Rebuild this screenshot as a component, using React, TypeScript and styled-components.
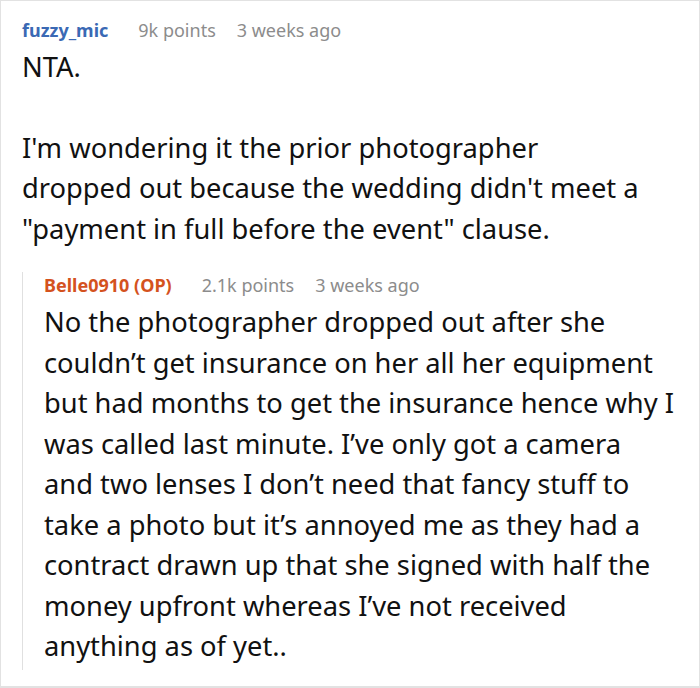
import { createGlobalStyle, styled } from "styled-components";

const GlobalStyle = createGlobalStyle`
  html, body {
    margin: 0;
    padding: 0;
    background: #ffffff;
  }
  body {
    font-family: "Noto Sans", "Open Sans", sans-serif;
  }
`;

const Frame = styled.div`
  box-sizing: border-box;
  width: 700px;
  height: 688px;
  border: 1px solid #e2e2e2;
  border-bottom-width: 2px;
  padding: 15.5px 4px 0 21px;
  overflow: hidden;
`;

const Header = styled.div`
  display: flex;
  align-items: baseline;
  gap: 21px;
  font-size: 18px;
  line-height: 27px;
`;

const Author = styled.span<{ $op?: boolean }>`
  font-weight: 700;
  margin-right: 9px;
  color: ${(p) => (p.$op ? "#d4521e" : "#3a69b4")};
`;

const Meta = styled.span`
  color: #8c8c8c;
`;

const Body = styled.div`
  margin-top: 3px;
  font-size: 27.3px;
  line-height: 40.5px;
  color: #111;
  white-space: nowrap;
`;

const Paragraph = styled.p<{ $gap?: number }>`
  margin: ${(p) => p.$gap ?? 0}px 0 0;
`;

const Line = styled.span`
  display: block;
`;

const Reply = styled.div`
  margin-top: 34.5px;
  border-left: 1px solid #e0e0e0;
  padding: 0 0 3px 21px;
`;

const ReplyHeader = styled(Header)`
  margin-top: -11.5px;
`;

const ReplyBody = styled(Body)`
  margin-top: 3px;
`;

const question = [
  "I'm wondering it the prior photographer",
  "dropped out because the wedding didn't meet a",
  '"payment in full before the event" clause.',
];

const answer = [
  "No the photographer dropped out after she",
  "couldn’t get insurance on her all her equipment",
  "but had months to get the insurance hence why I",
  "was called last minute. I’ve only got a camera",
  "and two lenses I don’t need that fancy stuff to",
  "take a photo but it’s annoyed me as they had a",
  "contract drawn up that she signed with half the",
  "money upfront whereas I’ve not received",
  "anything as of yet..",
];

export default function App() {
  return (
    <>
      <GlobalStyle />
      <Frame>
        <Header>
          <Author>fuzzy_mic</Author>
          <Meta>9k points</Meta>
          <Meta>3 weeks ago</Meta>
        </Header>
        <Body>
          <Paragraph>NTA.</Paragraph>
          <Paragraph $gap={40.5}>
            {question.map((l) => (
              <Line key={l}>{l}</Line>
            ))}
          </Paragraph>
        </Body>
        <Reply>
          <ReplyHeader>
            <Author $op>Belle0910 (OP)</Author>
            <Meta>2.1k points</Meta>
            <Meta>3 weeks ago</Meta>
          </ReplyHeader>
          <ReplyBody>
            {answer.map((l) => (
              <Line key={l}>{l}</Line>
            ))}
          </ReplyBody>
        </Reply>
      </Frame>
    </>
  );
}
